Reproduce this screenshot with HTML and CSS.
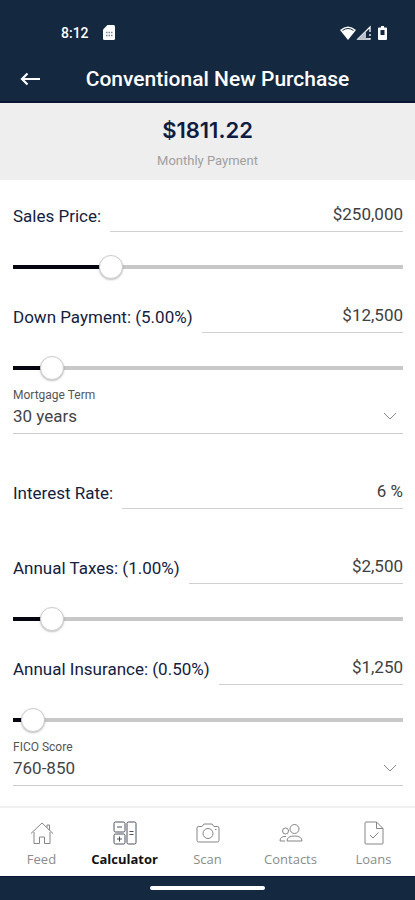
FILE: index.html
```
<!DOCTYPE html>
<html lang="en">
<head>
    <meta charset="UTF-8">
    <meta name="viewport" content="width=device-width, initial-scale=1">
    <title>Conventional New Purchase</title>
    <link rel="stylesheet" href="styles.css">
</head>
<body>
    <header class="header">
        <div class="status">
            <span class="time">8:12</span>
            <svg class="sim" width="12" height="15" viewBox="0 0 12 15">
                <path d="M4.500 0H10.500Q12 0 12 1.500V13.500Q12 15 10.500 15H1.500Q0 15 0 13.500V4.500Z" fill="#fff"/>
                <path d="M3 7.500h1.500M5.500 7.500h1.500M8 7.500h1.500M3 10.500h1.500M5.500 10.500h1.500M8 10.500h1.500" stroke="#7d8694" stroke-width="1.500"/>
            </svg>
            <svg class="signals" width="48" height="16" viewBox="0 0 48 16">
                <path d="M8 15L0 5Q8-2 16 5Z" fill="#fff"/>
                <path d="M2.500 5.500Q8 1.500 13.500 5.500" fill="none" stroke="#142840" stroke-width="1"/>
                <path d="M18 14L30 2V14Z" fill="none" stroke="#fff" stroke-width="1.300"/>
                <path d="M18 14L26 6V14Z" fill="#b8c0cb"/>
                <path d="M30 2V14" stroke="#142840" stroke-width="2" stroke-dasharray="0 5 2 2 2 9"/>
                <path d="M39 2.500h2V1h3v1.500h2q1 0 1 1V14q0 1-1 1h-7q-1 0-1-1V3.500q0-1 1-1Z" fill="#fff"/>
                <path d="M40.500 5h4v5h-4Z" fill="#142840"/>
            </svg>
        </div>
        <div class="titlebar">
            <button class="back" type="button" aria-label="Back">
                <svg width="20" height="14" viewBox="0 0 20 14" fill="none" stroke="#fff" stroke-width="2.200">
                    <path d="M20 7H2M7.500 1.500L2 7l5.500 5.500"/>
                </svg>
            </button>
            <h1>Conventional New Purchase</h1>
        </div>
    </header>

    <section class="summary">
        <div class="amount">$1811.22</div>
        <div class="caption">Monthly Payment</div>
    </section>

    <main class="form">
        <div class="field">
            <label for="price">Sales Price:</label>
            <input id="price" type="text" value="$250,000">
        </div>
        <input class="slider" type="range" min="0" max="1000000" value="250000" style="--fill: 25%" aria-label="Sales Price">

        <div class="field">
            <label for="down">Down Payment: (5.00%)</label>
            <input id="down" type="text" value="$12,500">
        </div>
        <input class="slider" type="range" min="0" max="50" value="5" style="--fill: 10%" aria-label="Down Payment">

        <div class="picker">
            <label for="term">Mortgage Term</label>
            <select id="term">
                <option>30 years</option>
                <option>20 years</option>
                <option>15 years</option>
            </select>
            <svg class="chevron" width="14" height="8" viewBox="0 0 14 8"><path d="M1 1l6 6 6-6"/></svg>
        </div>

        <div class="field spaced">
            <label for="rate">Interest Rate:</label>
            <input id="rate" type="text" value="6 %">
        </div>

        <div class="field spaced">
            <label for="taxes">Annual Taxes: (1.00%)</label>
            <input id="taxes" type="text" value="$2,500">
        </div>
        <input class="slider" type="range" min="0" max="10" value="1" style="--fill: 10%" aria-label="Annual Taxes">

        <div class="field">
            <label for="insurance">Annual Insurance: (0.50%)</label>
            <input id="insurance" type="text" value="$1,250">
        </div>
        <input class="slider" type="range" min="0" max="10" step="0.5" value="0.5" style="--fill: 5%" aria-label="Annual Insurance">

        <div class="picker">
            <label for="fico">FICO Score</label>
            <select id="fico">
                <option>760-850</option>
                <option>700-759</option>
                <option>640-699</option>
            </select>
            <svg class="chevron" width="14" height="8" viewBox="0 0 14 8"><path d="M1 1l6 6 6-6"/></svg>
        </div>
    </main>

    <nav class="tabs">
        <a href="#feed">
            <svg width="24" height="24" viewBox="0 0 24 24">
                <path d="M1 12.500L12 2l11 10.500M17 6.500V4h2.500v5M4 11v11.500h5.500V16h5v6.500H20V11"/>
            </svg>
            Feed
        </a>
        <a href="#calculator" class="active">
            <svg width="24" height="24" viewBox="0 0 24 24">
                <rect x="1" y="1" width="11" height="10" rx="1.500"/>
                <rect x="1" y="13" width="11" height="10" rx="1.500"/>
                <rect x="14" y="1" width="9" height="22" rx="1.500"/>
                <path d="M4 6h5M4 18h5M6.500 15.500v5M16.500 10.500h4M16.500 13.500h4"/>
            </svg>
            Calculator
        </a>
        <a href="#scan">
            <svg width="24" height="24" viewBox="0 0 24 24">
                <path d="M2.500 5.500H6L8 3h8l2 2.500h3.500q1.500 0 1.500 1.500v12.500q0 1.500-1.500 1.500h-19Q1 21 1 19.500V7q0-1.500 1.500-1.500Z"/>
                <circle cx="12" cy="12.500" r="5"/>
                <path d="M19 8.500h1.500"/>
            </svg>
            Scan
        </a>
        <a href="#contacts">
            <svg width="24" height="24" viewBox="0 0 24 24">
                <circle cx="15.500" cy="8" r="4.500"/>
                <circle cx="6.500" cy="10" r="3"/>
                <path d="M8 20q0-5 7.500-5t7.500 5ZM6 20H1q0-5 6-4.500"/>
            </svg>
            Contacts
        </a>
        <a href="#loans">
            <svg width="24" height="24" viewBox="0 0 24 24">
                <path d="M14.500 1H4q-1 0-1 1v20q0 1 1 1h16q1 0 1-1V7.500ZM14.500 1v6.500H21M8 14l3 3 5.500-5.500"/>
            </svg>
            Loans
        </a>
    </nav>
    <footer class="homebar"><span></span></footer>
</body>
</html>
```
FILE: styles.css
```
* {
    box-sizing: border-box;
}

body {
    margin: 0;
    min-height: 100vh;
    display: flex;
    flex-direction: column;
    font-family: Roboto, sans-serif;
    background-color: #fff;
    color: #142040;
}

.header {
    background-color: #142840;
    border-bottom: 2px solid #0a1535;
    color: #fff;
}

.status {
    display: flex;
    align-items: center;
    height: 55px;
    padding: 10px 27px 0 61px;
}

.time {
    font-size: 14px;
    font-weight: 500;
}

.sim {
    margin-left: 14px;
}

.signals {
    margin-left: auto;
}

.titlebar {
    display: flex;
    align-items: center;
    height: 46px;
    padding: 2px 20px 0;
}

.back {
    display: flex;
    width: 20px;
    padding: 0;
    border: 0;
    background: none;
}

h1 {
    flex: 1;
    margin: 0;
    text-align: center;
    font-size: 21px;
    font-weight: 500;
    white-space: nowrap;
}

.summary {
    height: 77px;
    padding-top: 12px;
    background-color: #eee;
    text-align: center;
}

.amount {
    font-family: Inter, sans-serif;
    font-size: 22px;
    font-weight: 600;
    line-height: 30px;
    color: #0f1c42;
}

.caption {
    margin-top: 8px;
    font-size: 13px;
    line-height: 16px;
    color: #a0a0a0;
}

.form {
    flex: 1;
    padding: 0 12px 20px 13px;
}

.field {
    display: flex;
    align-items: flex-end;
    gap: 9px;
    height: 52px;
}

.spaced {
    margin-top: 23px;
}

.field label {
    padding-bottom: 6px;
    font-size: 17px;
    line-height: 20px;
}

.field input {
    flex: 1;
    min-width: 0;
    height: 36px;
    padding: 0;
    border: 0;
    border-bottom: 1px solid #d0d0d0;
    background: none;
    font-family: inherit;
    font-size: 17px;
    color: #404040;
    text-align: right;
}

/* the track is inset by half a thumb on each side */
.slider {
    -webkit-appearance: none;
    appearance: none;
    display: block;
    width: calc(100% + 24px);
    height: 24px;
    margin: 23px -12px 2px;
    background: linear-gradient(to right, #050512 var(--fill), #c8c8c8 var(--fill)) center / calc(100% - 24px) 4px no-repeat;
}

.slider::-webkit-slider-thumb {
    -webkit-appearance: none;
    width: 24px;
    height: 24px;
    border: 1px solid #ccc;
    border-radius: 50%;
    background-color: #fff;
    box-shadow: 0 1px 2px rgba(0, 0, 0, 0.25);
}

.picker {
    position: relative;
    padding-top: 6px;
}

.picker label {
    display: block;
    font-size: 12px;
    line-height: 14px;
    color: #555;
}

.picker select {
    -webkit-appearance: none;
    appearance: none;
    display: block;
    width: 100%;
    height: 32px;
    padding: 0 0 4px;
    border: 0;
    border-bottom: 1px solid #ccc;
    border-radius: 0;
    background: none;
    font-family: inherit;
    font-size: 17px;
    color: #444;
}

.chevron {
    position: absolute;
    right: 6px;
    bottom: 14px;
    fill: none;
    stroke: #888;
    pointer-events: none;
}

.tabs {
    display: flex;
    height: 70px;
    border-top: 2px solid #f0f0f0;
}

.tabs a {
    flex: 1;
    display: flex;
    flex-direction: column;
    align-items: center;
    gap: 5px;
    padding-top: 13px;
    font-family: "Open Sans", sans-serif;
    font-size: 13px;
    line-height: 18px;
    color: #8c8c8c;
    text-decoration: none;
}

.tabs svg {
    fill: none;
    stroke: #858585;
}

.tabs .active {
    font-weight: 700;
    color: #111;
}

.tabs .active svg {
    stroke: #4a505c;
}

.homebar {
    display: flex;
    justify-content: center;
    height: 24px;
    padding-top: 9px;
    background-color: #142840;
    border-top: 1px solid #0a1535;
}

.homebar span {
    width: 115px;
    height: 4px;
    border-radius: 2px;
    background-color: #fff;
}
```
